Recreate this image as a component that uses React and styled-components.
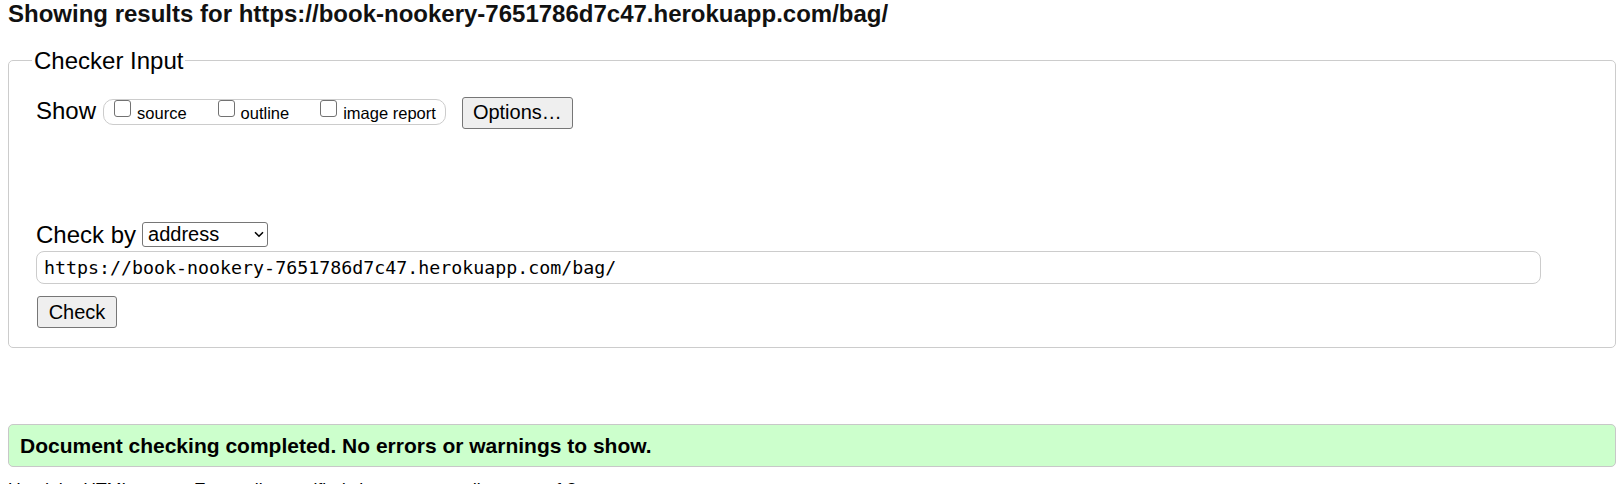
import React from 'react';
import styled, { createGlobalStyle } from 'styled-components';

const GlobalStyle = createGlobalStyle`
  body {
    margin: 0 8px;
    background: #fff;
    color: #000;
    font-family: "Liberation Sans", Arial, sans-serif;
  }
`;

const Heading = styled.h2`
  margin: 0 0 19.5px;
  font-size: 24px;
  font-weight: 700;
  line-height: 1.15;
  color: #111;
`;

const Fieldset = styled.fieldset`
  margin: 0;
  padding: 0 74px 19px 27px;
  border: 1px solid #ccc;
  border-radius: 5px;
  min-width: 0;
`;

const Legend = styled.legend`
  margin-left: -4px;
  padding: 0 2px;
  font-size: 24px;
  line-height: 1.15;
`;

const Row = styled.div`
  display: flex;
  align-items: flex-start;
  margin-top: ${p => p.$top}px;
  height: ${p => p.$height}px;
`;

const Label = styled.span`
  font-size: 24px;
  line-height: 1.15;
  margin-right: ${p => p.$gap}px;
`;

const ShowBox = styled.div`
  display: flex;
  align-items: flex-start;
  box-sizing: border-box;
  height: 26px;
  margin-top: 2px;
  padding: 0 9px 0 10px;
  border: 1px solid #ccc;
  border-radius: 10px;
`;

const Option = styled.label`
  display: flex;
  align-items: flex-start;
  margin-right: ${p => (p.$last ? 0 : 31)}px;
`;

const Checkbox = styled.input.attrs({ type: 'checkbox' })`
  appearance: none;
  box-sizing: border-box;
  width: 17px;
  height: 17px;
  margin: 0 6px 0 0;
  border: 1.5px solid #727272;
  border-radius: 3px;
  background: #fff;
`;

const OptionText = styled.span`
  margin-top: 4px;
  font-size: 16.5px;
  line-height: 1.15;
`;

const Button = styled.button`
  box-sizing: border-box;
  width: ${p => p.$width}px;
  height: 32px;
  margin: ${p => p.$margin || 0};
  padding: 0;
  border: 1px solid #767676;
  border-radius: 3px;
  background: #efefef;
  color: #000;
  font-family: "Liberation Sans", Arial, sans-serif;
  font-size: 20px;
`;

const SelectWrap = styled.div`
  position: relative;
  margin-top: 1px;
`;

const Select = styled.select`
  appearance: none;
  box-sizing: border-box;
  width: 126px;
  height: 25px;
  margin: 0;
  padding: 0 0 0 5px;
  border: 1px solid #767676;
  border-radius: 3px;
  background: #fff;
  color: #000;
  font-family: "Liberation Sans", Arial, sans-serif;
  font-size: 20px;
  line-height: 23px;
`;

const Chevron = styled.svg`
  position: absolute;
  right: 4px;
  top: 9px;
  pointer-events: none;
`;

const UrlInput = styled.input`
  display: block;
  box-sizing: border-box;
  width: 100%;
  height: 33px;
  margin: 2px 0 0;
  padding: 0 7px;
  border: 1px solid #ccc;
  border-radius: 8px;
  font-family: "DejaVu Sans Mono", "Liberation Mono", monospace;
  font-size: 18.3px;
  color: #000;
  outline: none;
`;

const Success = styled.div`
  box-sizing: border-box;
  margin-top: 76px;
  padding: 9px 11px;
  border: 1px solid #c8c8c8;
  border-radius: 5px;
  background: #ccffcc;
  font-size: 21px;
  font-weight: 700;
  line-height: 1.1;
`;

const Note = styled.p`
  margin: 13px 0 0;
  font-size: 17.6px;
  line-height: 1.15;
`;

export default function App() {
  return (
    <>
      <GlobalStyle />
      <Heading>Showing results for https://book-nookery-7651786d7c47.herokuapp.com/bag/</Heading>
      <Fieldset>
        <Legend>Checker Input</Legend>
        <Row $top={22} $height={32}>
          <Label $gap={7}>Show</Label>
          <ShowBox>
            <Option>
              <Checkbox />
              <OptionText>source</OptionText>
            </Option>
            <Option>
              <Checkbox />
              <OptionText>outline</OptionText>
            </Option>
            <Option $last>
              <Checkbox />
              <OptionText>image report</OptionText>
            </Option>
          </ShowBox>
          <Button type="button" $width={111} $margin="0 0 0 16px">Options…</Button>
        </Row>
        <Row $top={92} $height={28}>
          <Label $gap={6}>Check by</Label>
          <SelectWrap>
            <Select defaultValue="address">
              <option value="address">address</option>
              <option value="file">file upload</option>
              <option value="text">text input</option>
            </Select>
            <Chevron width="10" height="7" viewBox="0 0 10 7">
              <path d="M1 1.2 L5 5.2 L9 1.2" fill="none" stroke="#000" strokeWidth="1.6" />
            </Chevron>
          </SelectWrap>
        </Row>
        <UrlInput defaultValue="https://book-nookery-7651786d7c47.herokuapp.com/bag/" />
        <Button type="button" $width={80} $margin="12.5px 0 0 1px">Check</Button>
      </Fieldset>
      <Success>Document checking completed. No errors or warnings to show.</Success>
      <Note>Used the HTML parser. Externally specified character encoding was utf-8.</Note>
    </>
  );
}
